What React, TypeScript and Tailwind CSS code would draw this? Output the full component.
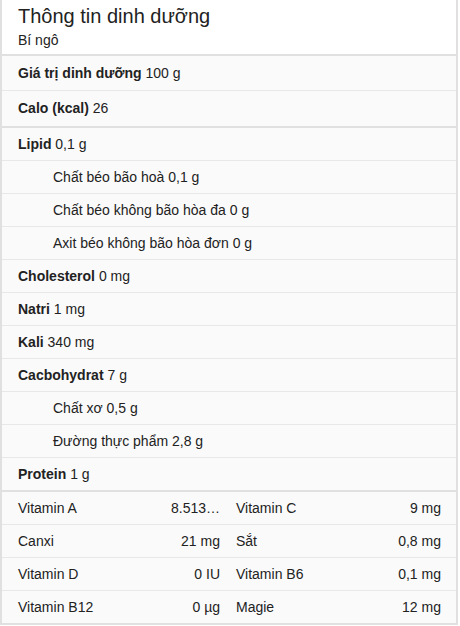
import React from "react";

const F = { fontFamily: '"Liberation Sans", Arial, sans-serif' };

function Row({ label, value, sub, h = "h-[33px]" }: { label: string; value: string; sub?: boolean; h?: string }) {
  return (
    <div
      className={`flex items-center ${h} border-b border-[#e8e8e8] text-[14px] text-[#222] ${sub ? "pl-[51px]" : "pl-[16px]"}`}
    >
      {sub ? (
        <span>
          {label} {value}
        </span>
      ) : (
        <span>
          <span className="font-bold">{label}</span> {value}
        </span>
      )}
    </div>
  );
}

function VRow({ a, av, b, bv, last }: { a: string; av: string; b: string; bv: string; last?: boolean }) {
  return (
    <div className={`grid grid-cols-2 text-[14px] text-[#222] ${last ? "h-[32px]" : "h-[33px] border-b border-[#e8e8e8]"}`}>
      <div className="flex items-center justify-between pl-[16px] pr-[9px]">
        <span>{a}</span>
        <span>{av}</span>
      </div>
      <div className="flex items-center justify-between pl-[7px] pr-[15px]">
        <span>{b}</span>
        <span>{bv}</span>
      </div>
    </div>
  );
}

export default function App() {
  return (
    <div className="w-[460px] h-[626px] bg-white" style={F}>
      <div className="w-[458px] border-l-2 border-r-2 border-b-2 border-[#e0e0e0] bg-[#fafafa]">
        <div className="h-[56px] bg-white border-b-2 border-[#e0e0e0] pl-[16px] pt-[3px]">
          <div className="text-[20px] leading-[26px] text-[#222]">Thông tin dinh dưỡng</div>
          <div className="text-[14px] leading-[18px] text-[#222] mt-[2px]">Bí ngô</div>
        </div>
        <div className="border-b-2 border-[#e0e0e0] [&>div:last-child]:border-b-0">
          <Row h="h-[35px]" label="Giá trị dinh dưỡng" value="100 g" />
          <Row h="h-[35px]" label="Calo (kcal)" value="26" />
        </div>
        <div className="border-b-2 border-[#e0e0e0] [&>div:last-child]:border-b-0">
          <Row label="Lipid" value="0,1 g" />
          <Row sub label="Chất béo bão hoà" value="0,1 g" />
          <Row sub label="Chất béo không bão hòa đa" value="0 g" />
          <Row sub label="Axit béo không bão hòa đơn" value="0 g" />
          <Row label="Cholesterol" value="0 mg" />
          <Row label="Natri" value="1 mg" />
          <Row label="Kali" value="340 mg" />
          <Row label="Cacbohydrat" value="7 g" />
          <Row sub label="Chất xơ" value="0,5 g" />
          <Row sub label="Đường thực phẩm" value="2,8 g" />
          <Row h="h-[32px]" label="Protein" value="1 g" />
        </div>
        <div>
          <VRow a="Vitamin A" av="8.513…" b="Vitamin C" bv="9 mg" />
          <VRow a="Canxi" av="21 mg" b="Sắt" bv="0,8 mg" />
          <VRow a="Vitamin D" av="0 IU" b="Vitamin B6" bv="0,1 mg" />
          <VRow last a="Vitamin B12" av="0 µg" b="Magie" bv="12 mg" />
        </div>
      </div>
    </div>
  );
}
